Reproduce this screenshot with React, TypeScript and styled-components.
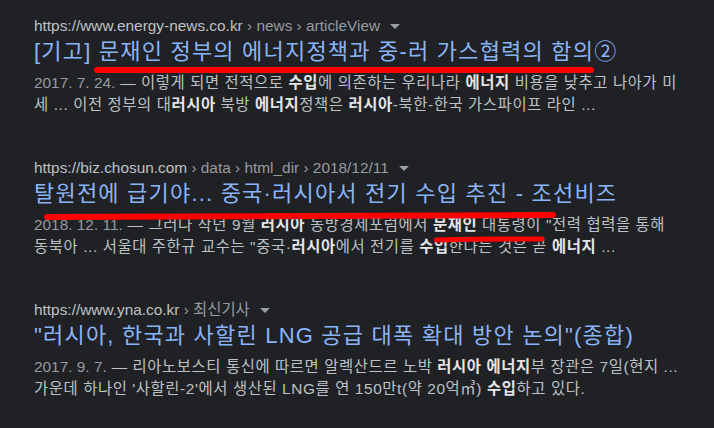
import React from 'react';
import styled, { createGlobalStyle } from 'styled-components';

const GlobalStyle = createGlobalStyle`
  html, body {
    margin: 0;
    padding: 0;
    background: #202124;
  }
  body {
    font-family: "Liberation Sans", "Noto Sans CJK KR", sans-serif;
  }
`;

const Page = styled.div`
  position: relative;
  width: 714px;
  height: 428px;
  overflow: hidden;
  background: #202124;
  padding: 16px 0 0 34px;
  box-sizing: border-box;
`;

const Result = styled.div`
  display: flex;
  flex-direction: column;
  margin-bottom: 42px;
`;

const Cite = styled.div`
  height: 20px;
  font-size: 15.4px;
  line-height: 20px;
  color: #bdc1c6;
  white-space: nowrap;
`;

const Crumbs = styled.span`
  color: #969ba1;
`;

const Caret = styled.span`
  display: inline-block;
  width: 0;
  height: 0;
  margin-left: 10px;
  vertical-align: middle;
  border-left: 5px solid transparent;
  border-right: 5px solid transparent;
  border-top: 5px solid #9aa0a6;
`;

const Title = styled.a`
  display: block;
  margin-top: 2px;
  font-size: 22px;
  line-height: 28px;
  letter-spacing: 1.2px;
  color: #8ab4f8;
  text-decoration: none;
  white-space: nowrap;
`;

const Snippet = styled.div`
  margin-top: 6px;
  font-size: 15.4px;
  line-height: 22px;
  letter-spacing: 0.6px;
  color: #bdc1c6;
`;

const Line = styled.div`
  white-space: nowrap;
`;

const Date = styled.span`
  color: #969ba1;
  letter-spacing: 0;
`;

const Em = styled.b`
  color: #e3e5e8;
  font-weight: bold;
`;

const Marks = styled.svg`
  position: absolute;
  left: 0;
  top: 0;
  pointer-events: none;
`;

type ResultData = {
  domain: string;
  crumbs: string;
  title: string;
  date: string;
  lines: React.ReactNode[];
};

const results: ResultData[] = [
  {
    domain: 'https://www.energy-news.co.kr',
    crumbs: ' › news › articleView',
    title: '[기고] 문재인 정부의 에너지정책과 중-러 가스협력의 함의②',
    date: '2017. 7. 24.',
    lines: [
      <>
        {' — 이렇게 되면 전적으로 '}<Em>수입</Em>에 의존하는 우리나라 <Em>에너지</Em> 비용을 낮추고 나아가 미
      </>,
      <>
        세 ... 이전 정부의 대<Em>러시아</Em> 북방 <Em>에너지</Em>정책은 <Em>러시아</Em>-북한-한국 가스파이프 라인 ...
      </>,
    ],
  },
  {
    domain: 'https://biz.chosun.com',
    crumbs: ' › data › html_dir › 2018/12/11',
    title: '탈원전에 급기야... 중국·러시아서 전기 수입 추진 - 조선비즈',
    date: '2018. 12. 11.',
    lines: [
      <>
        {' — 그러나 작년 9월 '}<Em>러시아</Em> 동방경제포럼에서 <Em>문재인</Em> 대통령이 "전력 협력을 통해
      </>,
      <>
        동북아 ... 서울대 주한규 교수는 "중국·<Em>러시아</Em>에서 전기를 <Em>수입</Em>한다는 것은 곧 <Em>에너지</Em> ...
      </>,
    ],
  },
  {
    domain: 'https://www.yna.co.kr',
    crumbs: ' › 최신기사',
    title: '"러시아, 한국과 사할린 LNG 공급 대폭 확대 방안 논의"(종합)',
    date: '2017. 9. 7.',
    lines: [
      <>
        {' — 리아노보스티 통신에 따르면 알렉산드르 노박 '}<Em>러시아 에너지</Em>부 장관은 7일(현지 ...
      </>,
      <>
        가운데 하나인 '사할린-2'에서 생산된 LNG를 연 150만t(약 20억㎥) <Em>수입</Em>하고 있다.
      </>,
    ],
  },
];

const App: React.FC = () => {
  return (
    <>
      <GlobalStyle />
      <Page>
        {results.map((r) => (
          <Result key={r.domain}>
            <Cite>
              {r.domain}
              <Crumbs>{r.crumbs}</Crumbs>
              <Caret />
            </Cite>
            <Title href="#">{r.title}</Title>
            <Snippet>
              <Line>
                <Date>{r.date}</Date>
                {r.lines[0]}
              </Line>
              <Line>{r.lines[1]}</Line>
            </Snippet>
          </Result>
        ))}
        <Marks width="714" height="428" viewBox="0 0 714 428">
          <g stroke="#ff0000" strokeLinecap="round" fill="none">
            <path d="M97 70 Q340 71 591 70" strokeWidth="6" />
            <path d="M47 217 Q300 216 553 215" strokeWidth="6" />
            <path d="M436 240 Q490 239 542 239" strokeWidth="5" />
          </g>
        </Marks>
      </Page>
    </>
  );
};

export default App;
